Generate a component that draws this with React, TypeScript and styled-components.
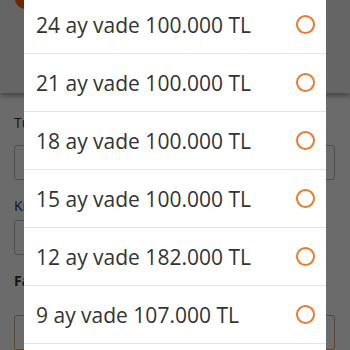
import React from 'react';
import styled, { createGlobalStyle } from 'styled-components';

const GlobalStyle = createGlobalStyle`
  html, body {
    margin: 0;
    padding: 0;
    height: 100%;
    overflow: hidden;
    background: #ffffff;
    font-family: 'Open Sans', 'Liberation Sans', sans-serif;
  }
`;

const Page = styled.div`
  width: 350px;
  height: 350px;
  position: relative;
  overflow: hidden;
  background: #ffffff;
`;

const Header = styled.header`
  display: flow-root;
  height: 93px;
  background: #f0f0f0;
  box-shadow: 0 3px 5px rgba(0, 0, 0, 0.35);
  position: relative;
`;

const Logo = styled.div`
  width: 20px;
  height: 20px;
  border-radius: 50%;
  background: #ff6200;
  margin: -11px 0 0 15px;
`;

const Form = styled.div`
  display: flex;
  flex-direction: column;
  padding: 22px 14px 0 14px;
`;

const Label = styled.div<{ $bold?: boolean; $gap: number }>`
  font-size: 14px;
  font-weight: ${({ $bold }) => ($bold ? 700 : 400)};
  color: #333;
  height: 16px;
  line-height: 16px;
  margin-bottom: ${({ $gap }) => $gap}px;
`;

const Input = styled.div<{ $accent?: boolean; $width?: string }>`
  height: 35px;
  width: ${({ $width }) => $width || '321px'};
  border: 1px solid ${({ $accent }) => ($accent ? '#d9a77e' : '#b8bec4')};
  border-radius: 3px;
  box-sizing: border-box;
  margin-bottom: 18px;
`;

const Overlay = styled.div`
  position: absolute;
  inset: 0;
  background: rgba(0, 0, 0, 0.58);
`;

const Sheet = styled.ul`
  position: absolute;
  top: -4px;
  bottom: 0;
  left: 24px;
  width: 302px;
  margin: 0;
  padding: 0;
  list-style: none;
  background: #ffffff;
  overflow: hidden;
`;

const Option = styled.li`
  height: 57px;
  display: flex;
  align-items: center;
  justify-content: space-between;
  padding: 0 11px 0 12px;
  border-bottom: 1px solid #e4e4e4;
`;

const OptionText = styled.span`
  font-family: 'Open Sans', 'Liberation Sans', sans-serif;
  font-size: 21px;
  color: #333333;
`;

const Radio = styled.span`
  width: 19px;
  height: 19px;
  border-radius: 50%;
  border: 2px solid #e87a30;
  box-sizing: border-box;
`;

const options = [
  '24 ay vade 100.000 TL',
  '21 ay vade 100.000 TL',
  '18 ay vade 100.000 TL',
  '15 ay vade 100.000 TL',
  '12 ay vade 182.000 TL',
  '9 ay vade 107.000 TL',
];

export default function App() {
  return (
    <Page>
      <GlobalStyle />
      <Header>
        <Logo />
      </Header>
      <Form>
        <Label $gap={14}>Tutar</Label>
        <Input />
        <Label $gap={6}>Kredi</Label>
        <Input $width="300px" />
        <Label $bold $gap={26}>Faiz</Label>
        <Input $accent />
      </Form>
      <Overlay>
        <Sheet>
          {options.map((o) => (
            <Option key={o}>
              <OptionText>{o}</OptionText>
              <Radio />
            </Option>
          ))}
        </Sheet>
      </Overlay>
    </Page>
  );
}
